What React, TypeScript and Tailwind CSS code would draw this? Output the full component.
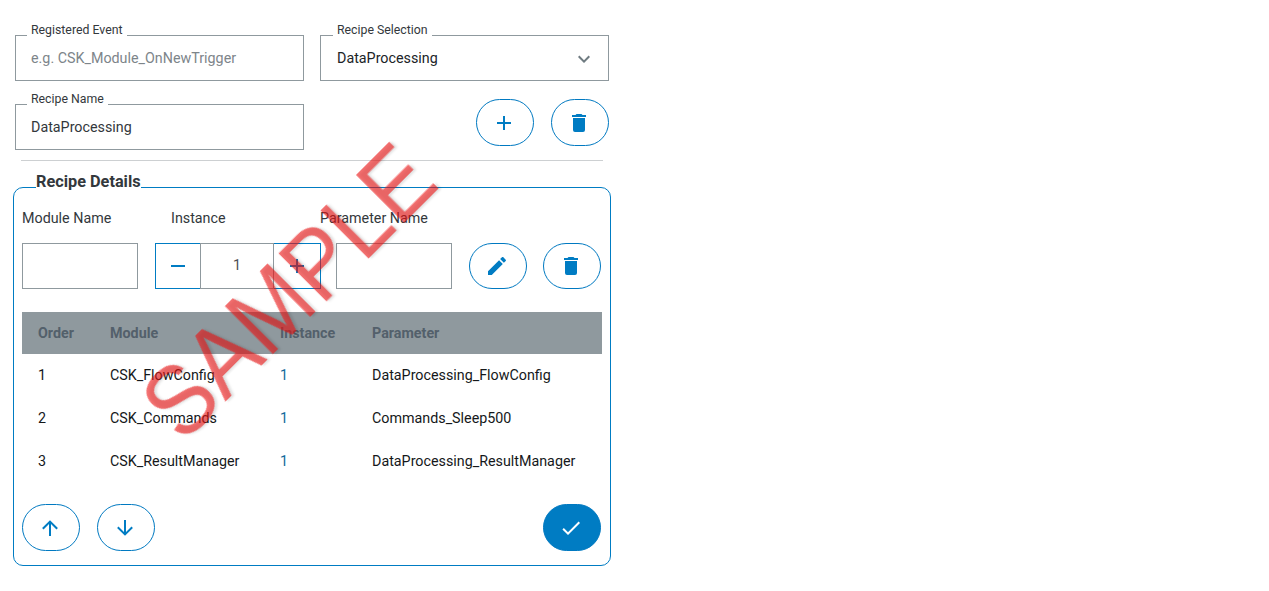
import type { ReactNode } from "react";

const ICONS = {
  plus: "M19 13h-6v6h-2v-6H5v-2h6V5h2v6h6z",
  minus: "M19 13H5v-2h14z",
  trash:
    "M19 4h-3.5l-1-1h-5l-1 1H5v2h14M6 19a2 2 0 0 0 2 2h8a2 2 0 0 0 2-2V7H6z",
  pencil:
    "M20.71 7.04c.39-.39.39-1.04 0-1.41l-2.34-2.34c-.37-.39-1.02-.39-1.41 0l-1.84 1.83 3.75 3.75M3 17.25V21h3.75L17.81 9.93l-3.75-3.75z",
  up: "M13 20h-2V8l-5.5 5.5-1.42-1.42L12 4.16l7.92 7.92-1.42 1.42L13 8z",
  down: "M11 4h2v12l5.5-5.5 1.42 1.42L12 19.84l-7.92-7.92L5.5 10.5 11 16z",
  check: "M9 16.17 4.83 12l-1.42 1.41L9 19 21 7l-1.41-1.41z",
  chevron: "M7.41 8.58 12 13.17l4.59-4.59L18 10l-6 6-6-6z",
};

type IconName = keyof typeof ICONS;

function Icon({ name, className = "" }: { name: IconName; className?: string }) {
  return (
    <svg viewBox="0 0 24 24" fill="currentColor" className={`size-6 ${className}`}>
      <path d={ICONS[name]} />
    </svg>
  );
}

interface PillButtonProps {
  icon: IconName;
  label: string;
  filled?: boolean;
  compact?: boolean;
}

function PillButton({ icon, label, filled = false, compact = false }: PillButtonProps) {
  return (
    <button
      aria-label={label}
      className={`flex w-[58px] shrink-0 items-center justify-center rounded-full border border-[#0079c1] pr-0.5 ${
        compact ? "h-[46px]" : "h-[47px]"
      } ${filled ? "bg-[#007cc3] text-white" : "bg-white text-[#007cc3]"}`}
    >
      <Icon name={icon} />
    </button>
  );
}

function OutlinedField({ label, inset = "pl-[15px]", children }: { label: string; inset?: string; children: ReactNode }) {
  return (
    <div
      className={`relative flex h-[46px] w-[289px] items-center justify-between border border-[#8f999e] pt-0.5 pr-[15px] text-[14.3px] ${inset}`}
    >
      <span className="absolute -top-[14px] -ml-1 bg-white px-1 text-[12.3px] leading-4 whitespace-nowrap text-[#33383c]">
        {label}
      </span>
      {children}
    </div>
  );
}

const ROWS = [
  { order: 1, module: "CSK_FlowConfig", instance: 1, parameter: "DataProcessing_FlowConfig" },
  { order: 2, module: "CSK_Commands", instance: 1, parameter: "Commands_Sleep500" },
  { order: 3, module: "CSK_ResultManager", instance: 1, parameter: "DataProcessing_ResultManager" },
];

export default function App() {
  return (
    <main className="relative h-[591px] w-[1269px] overflow-hidden bg-white font-['Roboto',sans-serif] text-[#33383c]">
      <div className="w-[611px] pt-[35px] pl-[13px]">
        <div className="flex gap-4 pl-[2px]">
          <OutlinedField label="Registered Event">
            <span className="text-[#7d858a]">e.g. CSK_Module_OnNewTrigger</span>
          </OutlinedField>
          <OutlinedField label="Recipe Selection" inset="pl-4">
            <span className="text-[#202427]">DataProcessing</span>
            <Icon name="chevron" className="-mr-[3px] text-[#6f7b81]" />
          </OutlinedField>
        </div>
        <div className="mt-[18px] flex items-start justify-between px-[2px]">
          <div className="mt-[5px]">
            <OutlinedField label="Recipe Name">
              <span>DataProcessing</span>
            </OutlinedField>
          </div>
          <div className="flex gap-[17px]">
            <PillButton icon="plus" label="Add" />
            <PillButton icon="trash" label="Delete" />
          </div>
        </div>
        <hr className="mt-[10px] ml-2 w-[582px] border-[#cdd0d2]" />

        <section className="relative mt-[26px] h-[379px] rounded-[10px] border border-[#007cc3] px-2">
          <h2 className="absolute -top-4 left-[22px] bg-white text-[16.3px] leading-5 font-bold whitespace-nowrap text-[#33383c]">
            Recipe Details
          </h2>
          <div className="flex pt-5 text-[14.3px] leading-5">
            <span className="w-[149px]">Module Name</span>
            <span className="w-[149px]">Instance</span>
            <span>Parameter Name</span>
          </div>
          <div className="mt-[15px] flex">
            <div className="h-[46px] w-[116px] border border-[#8f999e]" />
            <div className="ml-[17px] flex h-[46px] w-[166px] text-[#007cc3]">
              <div className="flex w-[45px] items-center justify-center border border-r-0 border-[#007cc3]">
                <Icon name="minus" />
              </div>
              <div className="flex w-[74px] items-center justify-center border border-[#8f999e] text-[14.3px] text-[#4b5054]">
                1
              </div>
              <div className="flex w-[47px] items-center justify-center border border-l-0 border-[#007cc3]">
                <Icon name="plus" />
              </div>
            </div>
            <div className="ml-[15px] h-[46px] w-[116px] border border-[#8f999e]" />
            <div className="ml-[17px] flex gap-4">
              <PillButton icon="pencil" label="Edit" compact />
              <PillButton icon="trash" label="Remove" compact />
            </div>
          </div>

          <table className="mt-[23px] w-[580px] table-fixed border-collapse text-left text-[14.3px]">
            <colgroup>
              <col className="w-[88px]" />
              <col className="w-[170px]" />
              <col className="w-[92px]" />
              <col className="w-[230px]" />
            </colgroup>
            <thead>
              <tr className="h-[42px] bg-[#8f999e] text-[#53606b]">
                <th className="pt-0.5 pl-4 font-bold">Order</th>
                <th className="pt-0.5 font-bold">Module</th>
                <th className="pt-0.5 font-bold">Instance</th>
                <th className="pt-0.5 font-bold">Parameter</th>
              </tr>
            </thead>
            <tbody>
              {ROWS.map((row) => (
                <tr key={row.order} className="h-[43px] text-[#15181a]">
                  <td className="pl-4">{row.order}</td>
                  <td>{row.module}</td>
                  <td className="text-[#126a9c]">{row.instance}</td>
                  <td>{row.parameter}</td>
                </tr>
              ))}
            </tbody>
          </table>

          <div className="mt-[21px] flex justify-between pr-px">
            <div className="flex gap-[17px]">
              <PillButton icon="up" label="Move up" />
              <PillButton icon="down" label="Move down" />
            </div>
            <PillButton icon="check" label="Confirm" filled />
          </div>
        </section>
      </div>

      <div className="pointer-events-none absolute top-[241px] left-[88px] flex h-[100px] w-[400px] -rotate-45 scale-x-[0.92] items-center justify-center font-['Liberation_Sans',Arial,sans-serif] text-[98px] leading-none text-[#ec1212]/60 drop-shadow-[2px_2px_1px_rgba(0,0,0,0.2)]">
        SAMPLE
      </div>
    </main>
  );
}
